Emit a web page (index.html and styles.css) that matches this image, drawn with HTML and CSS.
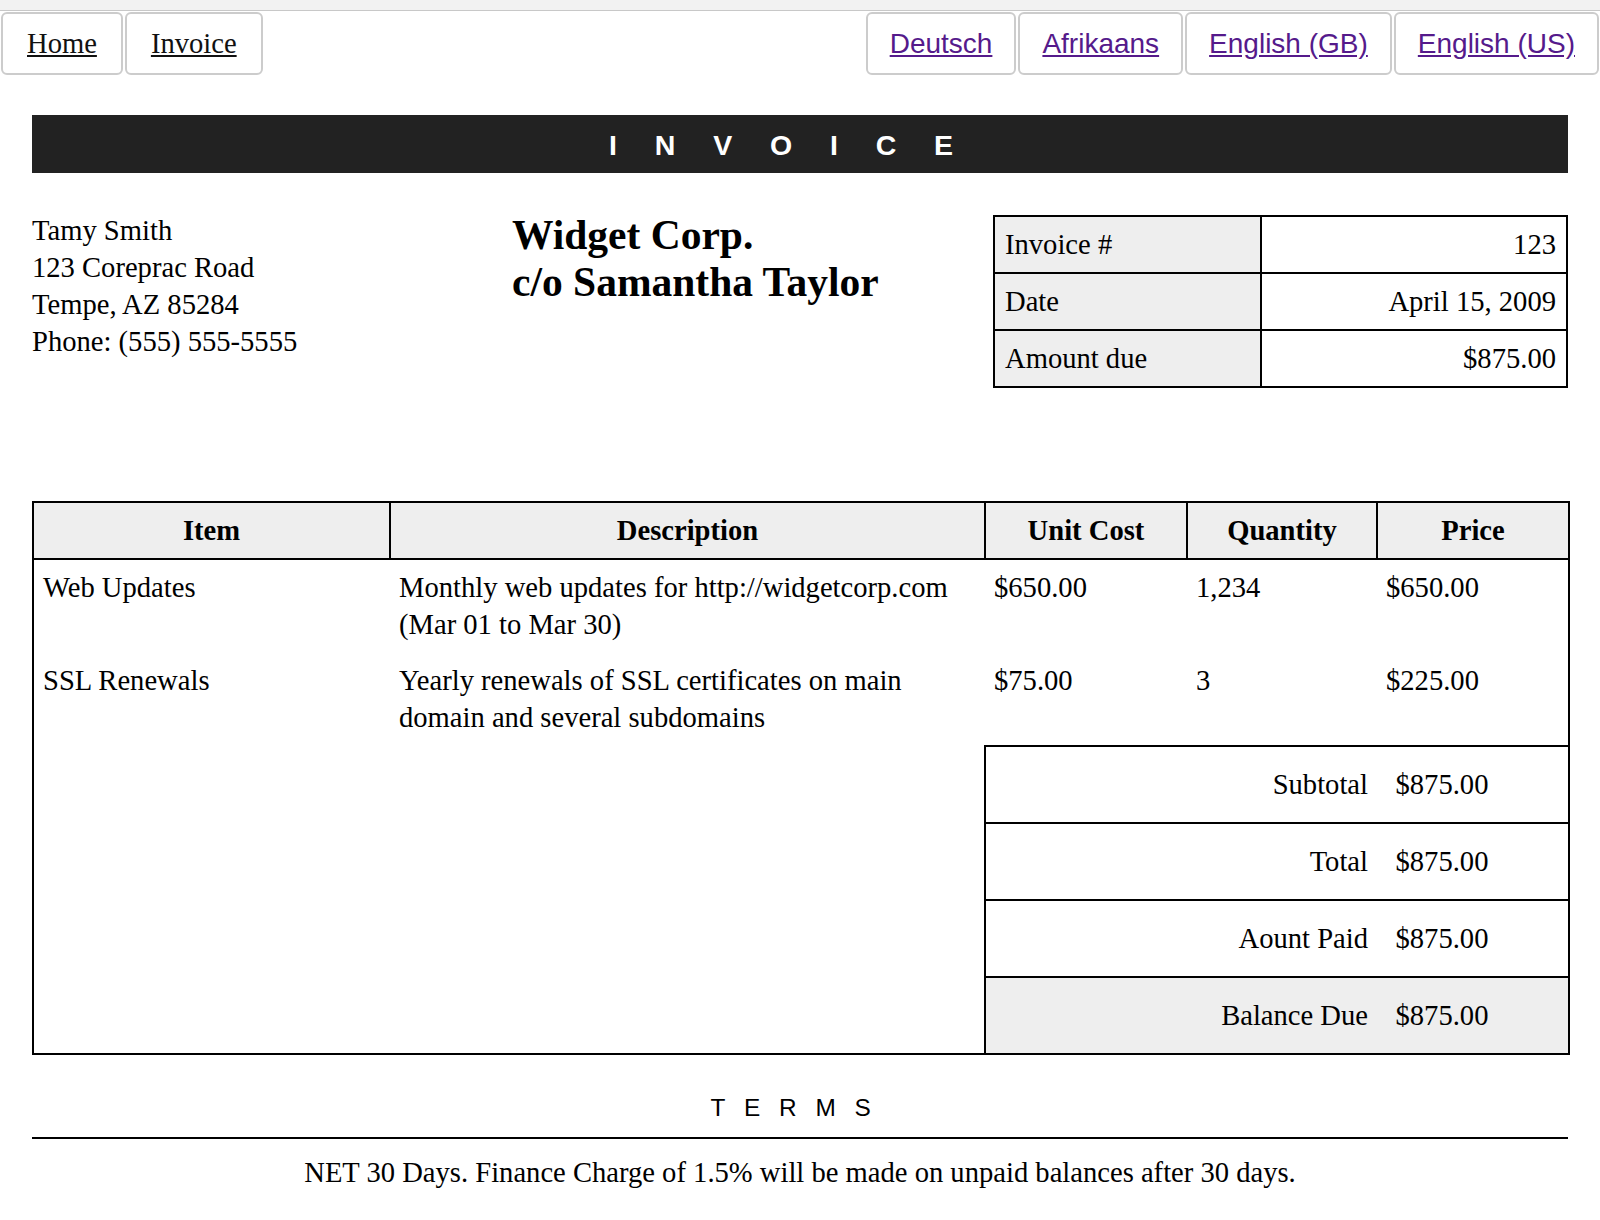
FILE: index.html
```html
<!DOCTYPE html>
<html lang="en">
<head>
<meta charset="utf-8">
<title>Invoice</title>
<link rel="stylesheet" href="styles.css">
</head>
<body>
<div class="topstrip"></div>
<nav class="tabs">
  <div class="tab-group">
    <a class="tab tab-serif" href="#">Home</a>
    <a class="tab tab-serif" href="#">Invoice</a>
  </div>
  <div class="tab-group">
    <a class="tab tab-lang" href="#">Deutsch</a>
    <a class="tab tab-lang" href="#">Afrikaans</a>
    <a class="tab tab-lang" href="#">English (GB)</a>
    <a class="tab tab-lang" href="#">English (US)</a>
  </div>
</nav>
<main class="page">
  <h1 class="banner">INVOICE</h1>
  <section class="info">
    <div class="address">Tamy Smith<br>123 Coreprac Road<br>Tempe, AZ 85284<br>Phone: (555) 555-5555</div>
    <div class="customer-title">Widget Corp.<br>c/o Samantha Taylor</div>
    <table class="meta">
      <tr><td class="meta-head">Invoice #</td><td class="meta-val">123</td></tr>
      <tr><td class="meta-head">Date</td><td class="meta-val">April 15, 2009</td></tr>
      <tr><td class="meta-head">Amount due</td><td class="meta-val">$875.00</td></tr>
    </table>
  </section>
  <table class="items">
    <colgroup>
      <col class="c-item"><col class="c-desc"><col class="c-cost"><col class="c-qty"><col class="c-price">
    </colgroup>
    <tr class="head-row">
      <th>Item</th><th>Description</th><th>Unit Cost</th><th>Quantity</th><th>Price</th>
    </tr>
    <tr class="item-row">
      <td>Web Updates</td>
      <td class="desc">Monthly web updates for http://widgetcorp.com<br>(Mar 01 to Mar 30)</td>
      <td>$650.00</td>
      <td>1,234</td>
      <td>$650.00</td>
    </tr>
    <tr class="item-row">
      <td>SSL Renewals</td>
      <td class="desc">Yearly renewals of SSL certificates on main<br>domain and several subdomains</td>
      <td>$75.00</td>
      <td>3</td>
      <td>$225.00</td>
    </tr>
    <tr>
      <td class="blank" colspan="2"></td>
      <td class="total-line" colspan="2">Subtotal</td>
      <td class="total-value">$875.00</td>
    </tr>
    <tr>
      <td class="blank" colspan="2"></td>
      <td class="total-line" colspan="2">Total</td>
      <td class="total-value">$875.00</td>
    </tr>
    <tr>
      <td class="blank" colspan="2"></td>
      <td class="total-line" colspan="2">Aount Paid</td>
      <td class="total-value">$875.00</td>
    </tr>
    <tr>
      <td class="blank" colspan="2"></td>
      <td class="total-line balance" colspan="2">Balance Due</td>
      <td class="total-value balance">$875.00</td>
    </tr>
  </table>
  <section class="terms">
    <h5 class="terms-title">Terms</h5>
    <p class="terms-text">NET 30 Days. Finance Charge of 1.5% will be made on unpaid balances after 30 days.</p>
  </section>
</main>
</body>
</html>
```

FILE: styles.css
```css
* { box-sizing: border-box; }

html, body {
  margin: 0;
  padding: 0;
  background: #fff;
}

body {
  font-family: "Liberation Serif", "Times New Roman", serif;
  font-size: 28.6px;
  color: #000;
}

.topstrip {
  height: 11px;
  background: #f2f2f2;
  border-bottom: 1px solid #c8c8c8;
}

.tabs {
  display: flex;
  justify-content: space-between;
  padding: 1px 1px 0 1px;
}

.tab-group {
  display: flex;
  gap: 2px;
}

.tab {
  display: block;
  height: 63px;
  line-height: 59px;
  padding: 0 22px;
  border: 2px solid #cccccc;
  border-radius: 6px;
  background: #fff;
  text-decoration: underline;
}

.tab-serif {
  font-family: "Liberation Serif", "Times New Roman", serif;
  font-size: 28.6px;
  color: #111;
  padding: 0 24px;
}

.tab-lang {
  font-family: "Liberation Sans", Arial, sans-serif;
  font-size: 28px;
  color: #551a8b;
  padding: 0 22px;
}

.page {
  padding: 0 32px;
}

.banner {
  margin: 40px 0 0 0;
  height: 58px;
  line-height: 61px;
  background: #222;
  color: #fff;
  text-align: center;
  font-family: "Liberation Sans", Arial, sans-serif;
  font-weight: bold;
  font-size: 28.5px;
  letter-spacing: 37.8px;
  overflow: hidden;
}

.info {
  display: flex;
  margin-top: 39px;
  height: 288.5px;
}

.address {
  flex: 0 0 480px;
  line-height: 37px;
}

.customer-title {
  flex: 1 1 auto;
  font-size: 41.5px;
  font-weight: bold;
  line-height: 47px;
}

.meta {
  flex: 0 0 575px;
  width: 575px;
  align-self: flex-start;
  margin-top: 3px;
  border-collapse: collapse;
  border: 2px solid #000;
}

.meta td {
  border: 2px solid #000;
  padding: 9px 10px;
  line-height: 37px;
}

.meta-head {
  width: 267px;
  background: #eee;
  text-align: left;
}

.meta-val {
  text-align: right;
}

.items {
  width: 100%;
  table-layout: fixed;
  border-collapse: collapse;
  border: 2px solid #000;
}

.c-item { width: 357px; }
.c-desc { width: 595px; }
.c-cost { width: 202px; }
.c-qty { width: 190px; }
.c-price { width: 192px; }

.items th {
  background: #eee;
  border: 2px solid #000;
  padding: 9px 9px;
  line-height: 37px;
  font-weight: bold;
  text-align: center;
}

.item-row td {
  padding: 9px 9px 10px 9px;
  line-height: 37px;
  vertical-align: top;
  text-align: left;
  border: 0;
}

.desc {
  white-space: nowrap;
}

.blank {
  border: 0;
  padding: 0;
}

.total-line {
  border: 2px solid #000;
  border-right: 0;
  text-align: right;
  padding: 19px 9px;
  line-height: 37px;
}

.total-value {
  border: 2px solid #000;
  border-left: 0;
  text-align: left;
  padding: 19px 18.5px;
  line-height: 37px;
}

.balance {
  background: #eee;
}

.terms {
  margin-top: 39px;
  text-align: center;
}

.terms-title {
  margin: 0 0 15px 0;
  padding: 0 0 15px 0;
  border-bottom: 2px solid #000;
  font-family: "Liberation Sans", Arial, sans-serif;
  font-weight: normal;
  font-size: 24.4px;
  letter-spacing: 18.75px;
  text-transform: uppercase;
}

.terms-text {
  margin: 0;
  line-height: 37px;
}
```
